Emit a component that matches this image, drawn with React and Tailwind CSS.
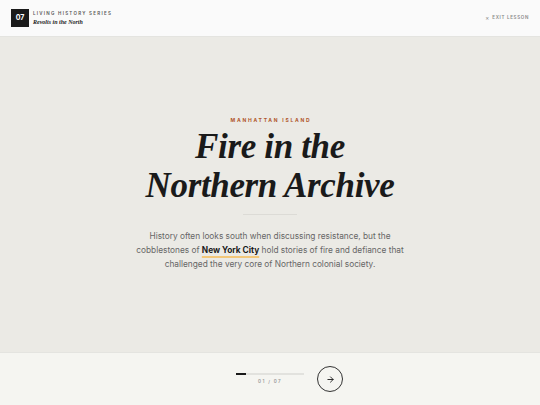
import React from "react";

export default function App() {
  return (
    <div className="w-[540px] h-[405px] flex flex-col overflow-hidden" style={{ fontFamily: "Inter, 'Liberation Sans', sans-serif" }}>
      <header className="h-[37px] shrink-0 bg-[#fafafa] border-b border-[#e4e4e0] flex items-center justify-between pl-[11px] pr-[11px]">
        <div className="flex items-center gap-[4px]">
          <div className="w-[18px] h-[18px] bg-[#1a1a1a] text-white flex items-center justify-center text-[7px] font-bold">07</div>
          <div className="flex flex-col gap-[1px]">
            <div className="text-[4.5px] tracking-[0.28em] text-[#555] font-semibold leading-[6px]">LIVING HISTORY SERIES</div>
            <div className="text-[6px] italic font-bold text-[#1a1a1a] leading-[8px]" style={{ fontFamily: "'Liberation Serif', serif" }}>Revolts in the North</div>
          </div>
        </div>
        <div className="flex items-center gap-[3px] text-[#888]">
          <span className="text-[6px] leading-none">×</span>
          <span className="text-[4.5px] tracking-[0.15em] font-semibold">EXIT LESSON</span>
        </div>
      </header>
      <main className="flex-1 bg-[#ebeae5] flex flex-col items-center pt-[80px]">
        <div className="text-[5px] font-bold tracking-[0.35em] text-[#b0562b] leading-[7px] pl-[2px]">MANHATTAN ISLAND</div>
        <h1 className="mt-[3px] text-center text-[35px] leading-[39px] italic font-bold text-[#1a1a1a] tracking-[-0.01em]" style={{ fontFamily: "'Liberation Serif', 'DejaVu Serif', serif" }}>
          Fire in the<br />Northern Archive
        </h1>
        <div className="mt-[9px] w-[54px] h-px bg-[#dcdbd6]"></div>
        <p className="mt-[14px] w-[285px] text-center text-[8.3px] leading-[14px] text-[#666]">
          History often looks south when discussing resistance, but the cobblestones of{" "}
          <span className="font-bold text-[#1a1a1a] underline decoration-[#f2c77a] decoration-2 underline-offset-[3px]">New York City</span>{" "}
          hold stories of fire and defiance that challenged the very core of Northern colonial society.
        </p>
      </main>
      <footer className="h-[53px] shrink-0 bg-[#f5f5f1] border-t border-[#e4e4e0] flex items-center justify-center gap-[13px] pl-[39px]">
        <div className="flex flex-col items-center gap-[4px] mt-[1px]">
          <div className="w-[68px] h-[2px] bg-[#e2e2de]">
            <div className="w-[10px] h-[2px] bg-[#1a1a1a]"></div>
          </div>
          <div className="text-[4.5px] tracking-[0.3em] text-[#999] font-semibold">01 / 07</div>
        </div>
        <div className="w-[26px] h-[26px] rounded-full border border-[#333] flex items-center justify-center">
          <svg width="9" height="9" viewBox="0 0 24 24" fill="none" stroke="#222" strokeWidth="2.5" strokeLinecap="round" strokeLinejoin="round">
            <path d="M5 12h14" />
            <path d="M12 5l7 7-7 7" />
          </svg>
        </div>
      </footer>
    </div>
  );
}
